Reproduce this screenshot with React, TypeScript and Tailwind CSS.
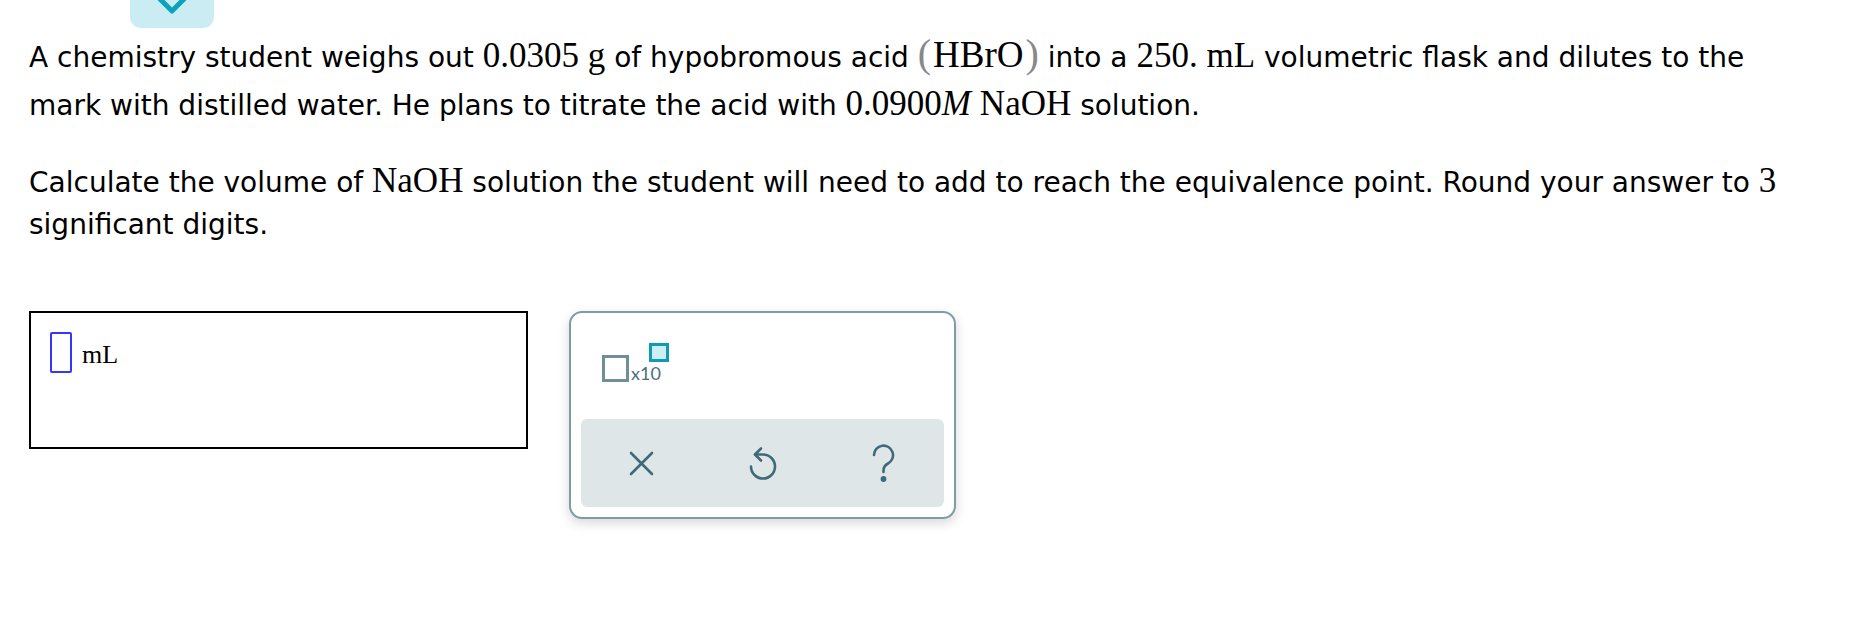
import React from "react";

function M({ children, className = "" }: { children: React.ReactNode; className?: string }) {
  return <span className={`font-['Liberation_Serif','Times_New_Roman',serif] leading-none ${className}`}>{children}</span>;
}

function UndoIcon() {
  return (
    <svg width="30" height="36" viewBox="0 0 30 36" fill="none" stroke="#3f6b78" strokeWidth="2.6" strokeLinecap="round" strokeLinejoin="round" className="overflow-visible">
      <path d="M7 9.5 H15 A12 12 0 1 1 3 21.5" />
      <path d="M13 3.5 L7 9.5 L13 15.5" />
    </svg>
  );
}

function HelpIcon() {
  return (
    <svg width="25" height="38" viewBox="0 0 25 38" fill="none" stroke="#3f6b78" strokeWidth="2.6" strokeLinecap="round">
      <path d="M3 11 A9.5 9.5 0 1 1 17 19.5 Q12.5 22 12.5 26.5 V28" />
      <circle cx="12.5" cy="35" r="1.6" fill="#3f6b78" />
    </svg>
  );
}

function CloseIcon() {
  return (
    <svg width="25" height="25" viewBox="0 0 25 25" fill="none" stroke="#3f6b78" strokeWidth="2.6" strokeLinecap="round">
      <path d="M2 2 L23 23 M23 2 L2 23" />
    </svg>
  );
}

export default function App() {
  return (
    <div className="min-h-screen bg-white text-black font-['Verdana','DejaVu_Sans',sans-serif]">
      <div className="pl-[29px] pr-[59px]">
        <div className="ml-[101px] h-[28px] w-[84px] rounded-b-[11px] bg-[#c9edf2] overflow-hidden">
          <svg width="84" height="28" viewBox="0 0 84 28" fill="none">
            <polyline points="27,-4 42,11 57,-4" stroke="#0ba3bb" strokeWidth="5" strokeLinejoin="round" />
          </svg>
        </div>

        <p className="mt-[6px] text-[28px] leading-[48px]">
          A chemistry student weighs out <M className="text-[35px]">0.0305</M> <M className="text-[35px]">g</M> of hypobromous acid{" "}
          <M className="text-[40px] text-[#888]">(</M>
          <M className="text-[37px] mx-[2px]">HBrO</M>
          <M className="text-[40px] text-[#888]">)</M> into a <M className="text-[35px]">250.</M> <M className="text-[35px]">mL</M> volumetric flask and dilutes to the mark with distilled water. He plans to titrate the acid with{" "}
          <M className="text-[35px]">
            0.0900<i>M</i>
          </M>{" "}
          <M className="text-[35px]">NaOH</M> solution.
        </p>

        <p className="mt-[32px] text-[28px] leading-[42px]">
          Calculate the volume of <M className="text-[35px]">NaOH</M> solution the student will need to add to reach the equivalence point. Round your answer to{" "}
          <M className="text-[35px]">3</M> significant digits.
        </p>

        <div className="mt-[65px] flex items-start gap-[41px]">
          <div className="w-[499px] h-[138px] border-2 border-black flex items-start pl-[19px] pt-[19px]">
            <div className="w-[22px] h-[41px] border-2 border-[#3535ff] rounded-[2px]" />
            <span className="ml-[10px] mt-[10px] font-['Liberation_Serif','Times_New_Roman',serif] text-[26px] leading-none">mL</span>
          </div>

          <div className="w-[387px] h-[208px] border-2 border-[#7d9da3] rounded-[13px] bg-white shadow-[0_4px_12px_rgba(0,0,0,0.16)] flex flex-col p-[10px]">
            <div className="flex items-start pl-[21px] pt-[20px]">
              <div className="mt-[12px] w-[27px] h-[27px] border-[3px] border-[#6f8e97]" />
              <div className="ml-[2px] flex flex-col">
                <div className="ml-[18px] w-[20px] h-[19px] border-[3px] border-[#0f9bb6] bg-[#cdeff4]" />
                <span className="mt-[2px] font-['Lato',sans-serif] text-[18px] leading-none text-[#4b6f7a]">x10</span>
              </div>
            </div>
            <div className="mt-auto h-[88px] rounded-[6px] bg-[#dfe6e8] flex">
              <button className="flex-1 flex items-center justify-center">
                <CloseIcon />
              </button>
              <button className="flex-1 flex items-center justify-center">
                <UndoIcon />
              </button>
              <button className="flex-1 flex items-center justify-center">
                <HelpIcon />
              </button>
            </div>
          </div>
        </div>
      </div>
    </div>
  );
}
